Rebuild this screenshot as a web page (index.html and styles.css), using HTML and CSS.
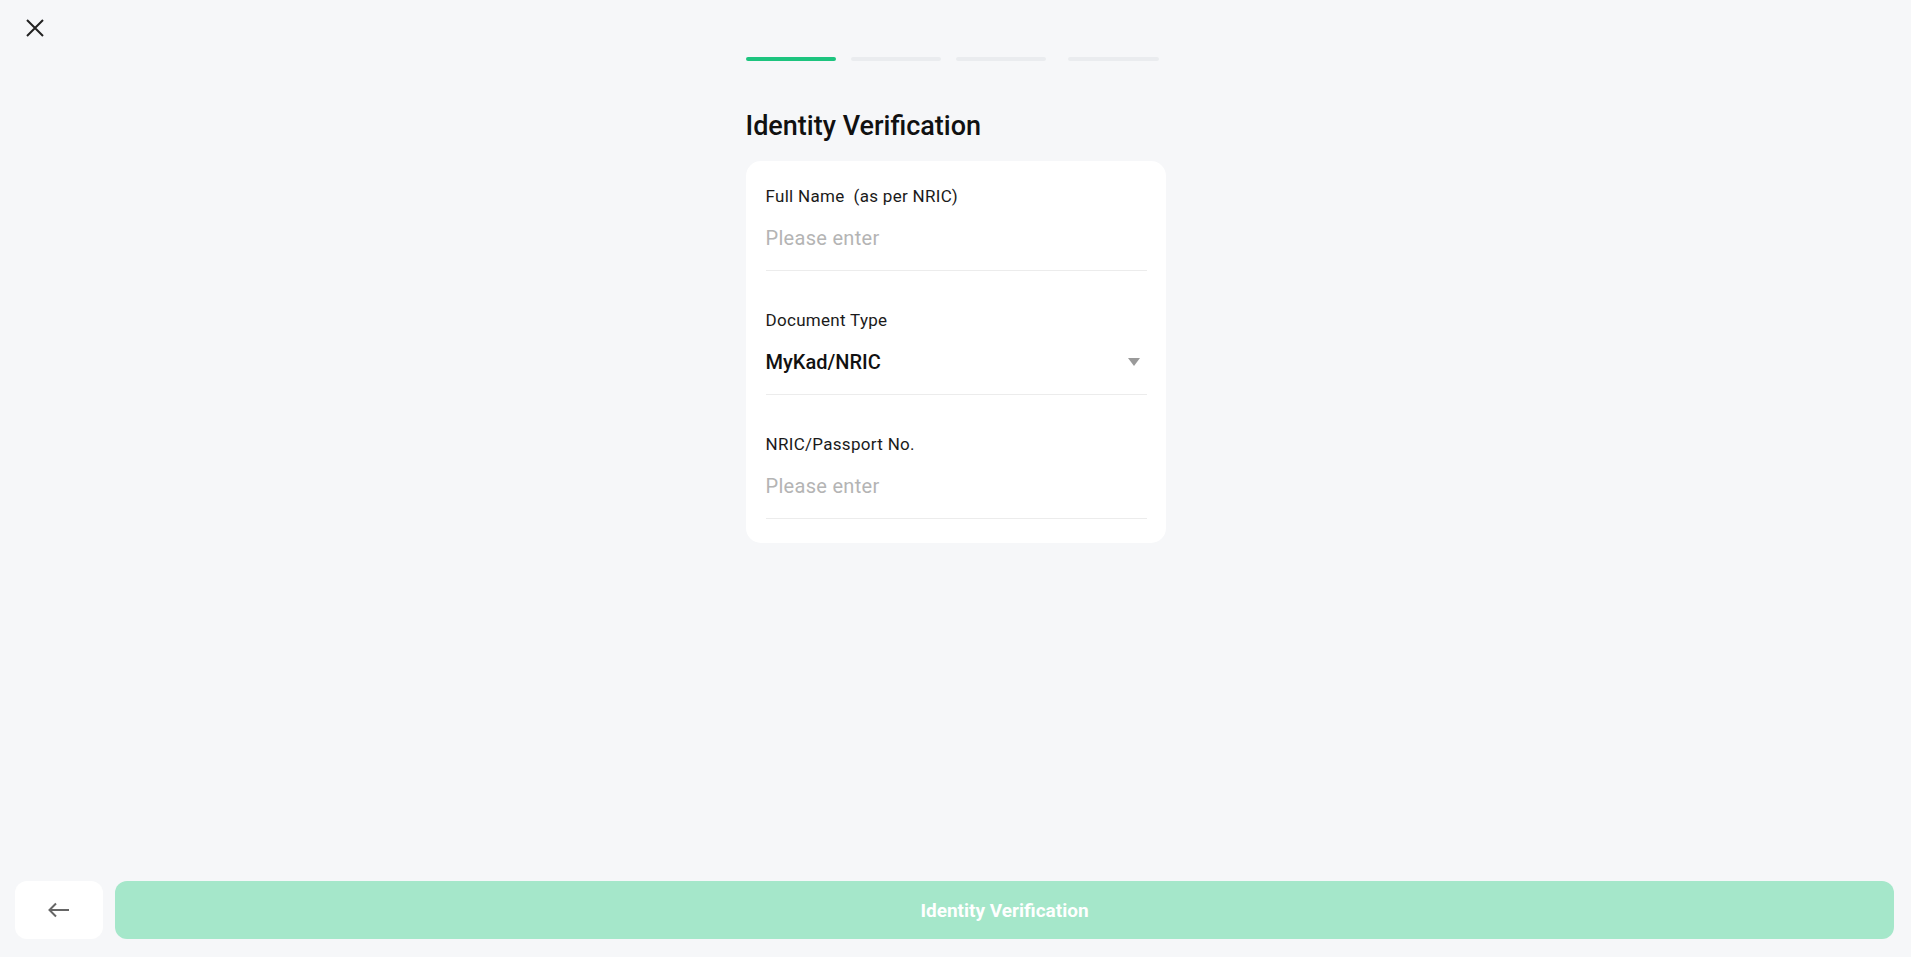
FILE: index.html
```html
<!DOCTYPE html>
<html lang="en">
<head>
  <meta charset="UTF-8">
  <title>Identity Verification</title>
  <link rel="stylesheet" href="styles.css">
</head>
<body>

  <!-- Cerrar -->
  <button class="close-btn" aria-label="Close">
    <svg width="18" height="18" viewBox="0 0 18 18">
      <path d="M1 1 L17 17 M17 1 L1 17" stroke="#222" stroke-width="2" fill="none"/>
    </svg>
  </button>

  <main class="content">
    <!-- Pasos -->
    <div class="steps">
      <span class="step active"></span>
      <span class="step"></span>
      <span class="step"></span>
      <span class="step"></span>
    </div>

    <h1 class="title">Identity Verification</h1>

    <div class="card">
      <div class="field">
        <label class="field-label" for="fullname">Full Name&nbsp;&nbsp;(as per NRIC)</label>
        <input class="field-input" id="fullname" type="text" placeholder="Please enter">
      </div>

      <div class="field">
        <div class="field-label">Document Type</div>
        <div class="field-select">
          <span>MyKad/NRIC</span>
          <svg width="12" height="8" viewBox="0 0 12 8">
            <path d="M0 0 L12 0 L6 8 Z" fill="#9a9a9a"/>
          </svg>
        </div>
      </div>

      <div class="field">
        <label class="field-label" for="docno">NRIC/Passport No.</label>
        <input class="field-input" id="docno" type="text" placeholder="Please enter">
      </div>
    </div>
  </main>

  <footer class="footer">
    <button class="back-btn" aria-label="Back">
      <svg width="22" height="16" viewBox="0 0 22 16">
        <path d="M21 8 H2 M8 1.5 L1.5 8 L8 14.5" stroke="#666" stroke-width="2" fill="none"/>
      </svg>
    </button>
    <button class="submit-btn">Identity Verification</button>
  </footer>

</body>
</html>
```

FILE: styles.css
```css
html, body {
  margin: 0;
  padding: 0;
}
body {
  font-family: Roboto, "Liberation Sans", sans-serif;
  background: #f6f7f9;
  color: #1a1a1a;
  min-height: 100vh;
  display: flex;
  flex-direction: column;
}
button {
  font-family: inherit;
  border: none;
  cursor: pointer;
}
.close-btn {
  position: absolute;
  left: 26px;
  top: 19px;
  width: 18px;
  height: 18px;
  padding: 0;
  background: none;
  display: flex;
}
.content {
  flex: 1;
  width: 420px;
  margin: 0 auto;
  padding-top: 57px;
}
.steps {
  display: flex;
  gap: 15px;
}
.step {
  width: 90px;
  height: 4px;
  border-radius: 2px;
  background: #eaecef;
}
.step.active {
  background: #1dc47f;
}
.step:last-child {
  margin-left: 7px;
  width: 91px;
}
.title {
  margin: 49px 0 19px;
  font-size: 27px;
  line-height: 32px;
  font-weight: 500;
  color: #111;
}
.card {
  background: #fff;
  border-radius: 15px;
  padding: 24px 19px 24px 20px;
}
.field {
  padding-bottom: 18px;
  border-bottom: 1px solid #ececec;
}
.field + .field {
  margin-top: 38px;
}
.field-label {
  display: block;
  font-size: 17px;
  line-height: 22px;
  letter-spacing: 0.3px;
  color: #1a1a1a;
}
.field-input {
  display: block;
  width: 100%;
  box-sizing: border-box;
  margin-top: 17px;
  height: 28px;
  padding: 0;
  border: none;
  outline: none;
  background: transparent;
  font-family: inherit;
  font-size: 20px;
  line-height: 28px;
  letter-spacing: 0.3px;
  color: #111;
}
.field-input::placeholder {
  color: #b4b4b4;
}
.field-select {
  margin-top: 17px;
  height: 28px;
  display: flex;
  align-items: center;
  justify-content: space-between;
  font-size: 20px;
  line-height: 28px;
  font-weight: 500;
  color: #111;
  padding-right: 7px;
}
.footer {
  display: flex;
  gap: 12px;
  padding: 0 17px 18px 15px;
}
.back-btn {
  width: 88px;
  height: 58px;
  border-radius: 12px;
  background: #fff;
  display: flex;
  align-items: center;
  justify-content: center;
}
.submit-btn {
  flex: 1;
  height: 58px;
  border-radius: 12px;
  background: #a5e7ca;
  color: #fff;
  font-size: 19px;
  font-weight: 700;
}
```
